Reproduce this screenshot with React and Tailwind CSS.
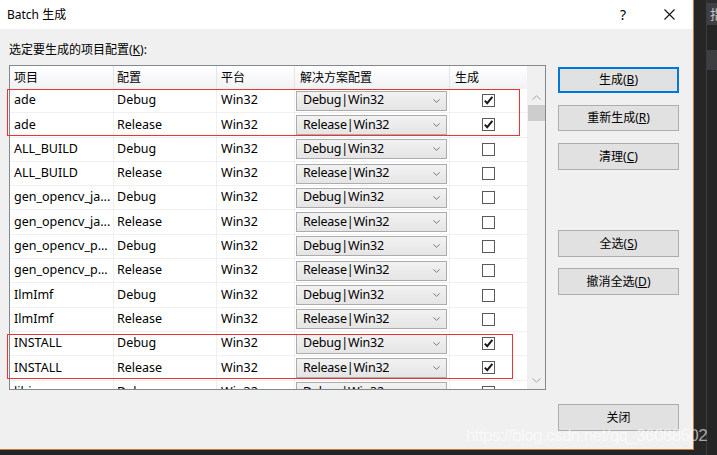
import React from 'react'

const rows = [
  { name: 'ade', cfg: 'Debug', sol: 'Debug|Win32', on: true },
  { name: 'ade', cfg: 'Release', sol: 'Release|Win32', on: true },
  { name: 'ALL_BUILD', cfg: 'Debug', sol: 'Debug|Win32' },
  { name: 'ALL_BUILD', cfg: 'Release', sol: 'Release|Win32' },
  { name: 'gen_opencv_ja...', cfg: 'Debug', sol: 'Debug|Win32' },
  { name: 'gen_opencv_ja...', cfg: 'Release', sol: 'Release|Win32' },
  { name: 'gen_opencv_p...', cfg: 'Debug', sol: 'Debug|Win32' },
  { name: 'gen_opencv_p...', cfg: 'Release', sol: 'Release|Win32' },
  { name: 'IlmImf', cfg: 'Debug', sol: 'Debug|Win32' },
  { name: 'IlmImf', cfg: 'Release', sol: 'Release|Win32' },
  { name: 'INSTALL', cfg: 'Debug', sol: 'Debug|Win32', on: true },
  { name: 'INSTALL', cfg: 'Release', sol: 'Release|Win32', on: true },
  { name: 'libjasper', cfg: 'Debug', sol: 'Debug|Win32' }
]

function Chevron ({ up, className }) {
  return (
    <svg width="9" height="5" viewBox="0 0 9 5" className={className}>
      <path d={up ? 'M0.5 4.5 L4.5 0.8 L8.5 4.5' : 'M0.5 0.5 L4.5 4.2 L8.5 0.5'} fill="none" stroke="currentColor" strokeWidth="1" />
    </svg>
  )
}

function Check ({ on }) {
  return (
    <div className="w-[13px] h-[13px] border border-[#5a5a5a] bg-white flex items-center justify-center">
      {on && (
        <svg width="11" height="11" viewBox="0 0 11 11">
          <path d="M1.8 5.6 L4.2 8.2 L9.4 1.8" fill="none" stroke="#1a1a1a" strokeWidth="2" />
        </svg>
      )}
    </div>
  )
}

function Btn ({ children, primary, className = '' }) {
  return (
    <div
      className={
        'w-[121px] h-[26px] bg-[#e1e1e1] flex items-center justify-center text-[12px] text-black ' +
        (primary ? 'border-2 border-[#0078d7] ' : 'border border-[#adadad] ') +
        className
      }
    >
      {children}
    </div>
  )
}

function Row ({ r }) {
  return (
    <div className="flex h-[24.3px] border-b border-[#f0f0f0] text-[12.5px] text-black shrink-0">
      <div className="w-[104px] border-r border-[#f0f0f0] pl-[4px] flex items-center whitespace-nowrap overflow-hidden">{r.name}</div>
      <div className="w-[103px] border-r border-[#f0f0f0] pl-[3px] flex items-center">{r.cfg}</div>
      <div className="w-[78px] border-r border-[#f0f0f0] pl-[4px] flex items-center">Win32</div>
      <div className="w-[155px] border-r border-[#f0f0f0] pl-px flex items-center">
        <div className="w-[151px] h-[20px] border border-[#acacac] bg-gradient-to-b from-[#f2f2f2] to-[#e5e5e5] flex items-center justify-between pl-[6px] pr-[6px]">
          <span className="tracking-[-0.2px]">{r.sol}</span>
          <Chevron className="text-[#5c5c5c] w-[7px] h-[4px]" />
        </div>
      </div>
      <div className="w-[77px] flex items-center justify-center pr-px">
        <Check on={r.on} />
      </div>
    </div>
  )
}

export default function App () {
  return (
    <div className="w-[717px] h-[455px] bg-[#252526] flex relative overflow-hidden font-['Noto_Sans','Noto_Sans_CJK_SC',sans-serif]">
      <div className="w-[694px] h-[450px] border-r border-b border-[#c97a3c] bg-[#f0f0f0] flex flex-col shrink-0">
        <div className="h-[29px] bg-white flex items-center justify-between pl-[7px] pr-[18px] shrink-0">
          <span className="text-[12px] text-black">Batch 生成</span>
          <div className="flex items-center gap-[38px]">
            <span className="text-[14px] text-black">?</span>
            <svg width="11" height="11" viewBox="0 0 11 11">
              <path d="M0.5 0.5 L10.5 10.5 M10.5 0.5 L0.5 10.5" stroke="#111" strokeWidth="1.1" />
            </svg>
          </div>
        </div>

        <div className="flex items-start pl-[9px]">
          <div className="flex flex-col pt-[11px]">
            <div className="h-[20px] leading-[20px] text-[12px] text-black">
              选定要生成的项目配置(<span className="underline">K</span>):
            </div>
            <div className="mt-[5px] w-[537px] h-[325px] border border-[#828790] bg-white flex overflow-hidden">
              <div className="w-[517px] flex flex-col overflow-hidden">
                <div className="h-[23px] flex shrink-0 bg-gradient-to-b from-white to-[#f1f2f4] text-[12px] text-black">
                  <div className="w-[104px] border-r border-[#e5e5e5] pl-[4px] flex items-center">项目</div>
                  <div className="w-[103px] border-r border-[#e5e5e5] pl-[3px] flex items-center">配置</div>
                  <div className="w-[78px] border-r border-[#e5e5e5] pl-[4px] flex items-center">平台</div>
                  <div className="w-[155px] border-r border-[#e5e5e5] pl-[5px] flex items-center">解决方案配置</div>
                  <div className="w-[77px] pl-[5px] flex items-center">生成</div>
                </div>
                {rows.map((r, i) => (
                  <Row key={i} r={r} />
                ))}
              </div>
              <div className="w-[18px] bg-[#f0f0f0] flex flex-col items-center pt-[29px]">
                <Chevron up className="text-[#a3a3a3]" />
                <div className="mt-[5px] w-[17px] h-[16px] bg-[#cdcdcd]" />
                <div className="flex-1" />
                <Chevron className="text-[#a3a3a3] mb-[6px]" />
              </div>
            </div>
          </div>

          <div className="flex flex-col pt-[38px] ml-[12px]">
            <Btn primary>生成(<span className="underline">B</span>)</Btn>
            <Btn className="mt-[12px]">重新生成(<span className="underline">R</span>)</Btn>
            <Btn className="mt-[12px] h-[27px]">清理(<span className="underline">C</span>)</Btn>
            <Btn className="mt-[60px] h-[27px]">全选(<span className="underline">S</span>)</Btn>
            <Btn className="mt-[11px] h-[27px]">撤消全选(<span className="underline">D</span>)</Btn>
            <Btn className="mt-[109px] h-[27px]">关闭</Btn>
          </div>
        </div>
      </div>

      <div className="flex-1 flex">
        <div className="w-[12px] bg-[#262626]" />
        <div className="flex-1 border-l border-[#3c3c3c] bg-[#2d2d30] flex flex-col pt-[3px]">
          <div className="h-[22px] bg-[#3f3f46] text-[13px] text-[#c8c8c8] pl-[3px] leading-[22px] whitespace-nowrap overflow-hidden">指</div>
          <div className="h-[25px] bg-[#252526]" />
          <div className="h-[20px] bg-[#3e3e42]" />
          <div className="flex-1 bg-[#252526]" />
        </div>
      </div>

      <div className="absolute left-[466px] top-[425px] text-[17px] leading-[22px] tracking-[-0.6px] text-white/60 font-['Liberation_Sans',sans-serif] whitespace-nowrap pointer-events-none">
        https://blog.csdn.net/qq_36088602
      </div>

      <div className="absolute left-[8px] top-[90px] w-[511px] h-[45px] ring-1 ring-[#ee3333] pointer-events-none" />
      <div className="absolute left-[8px] top-[335px] w-[504px] h-[43px] ring-1 ring-[#ee3333] pointer-events-none" />
    </div>
  )
}
